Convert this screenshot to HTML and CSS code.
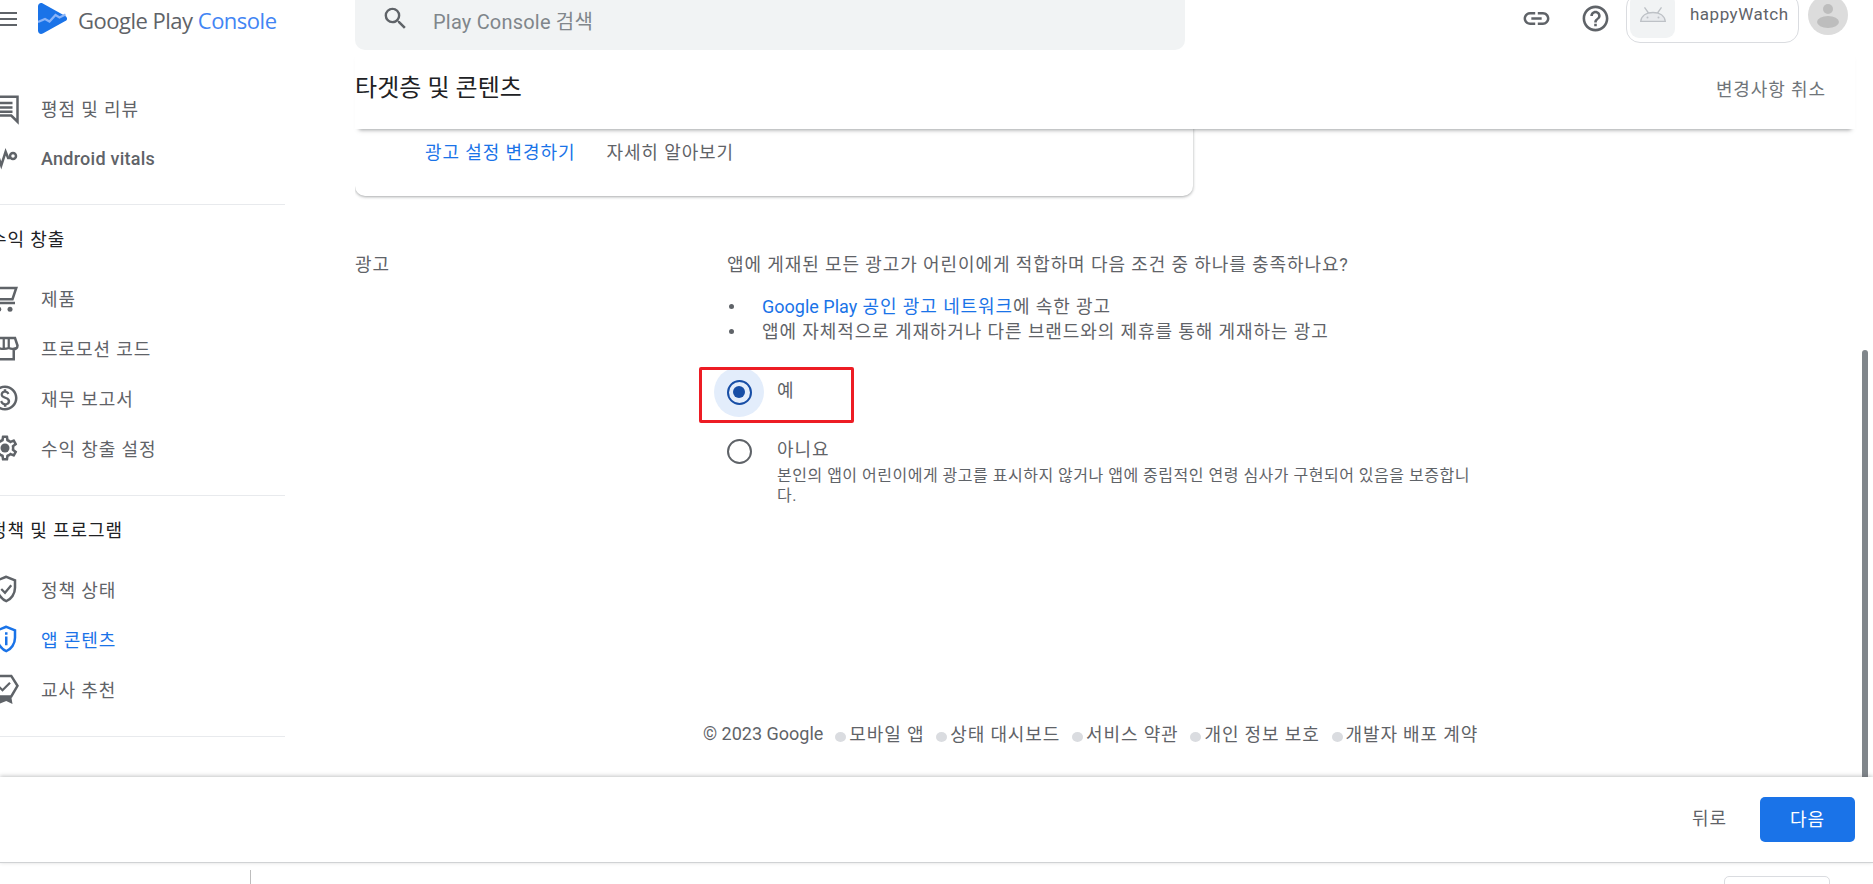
FILE: index.html
```html
<!DOCTYPE html>
<html lang="ko">
<head>
<meta charset="utf-8">
<title>Google Play Console</title>
<link rel="stylesheet" href="styles.css">
</head>
<body>
<div class="app">
  <header class="topbar">
    <div class="brand">
      <svg class="menu-icon" viewBox="0 0 18 18"><path d="M0 2h17v2H0zM0 8h17v2H0zM0 14h17v2H0z"/></svg>
      <svg class="logo" viewBox="0 0 29 31"><path d="M0 3.500C0 .8 2.600-.8 4.800.6l22.500 12.300c2.300 1.300 2.300 4 0 5.200L4.800 30.400C2.600 31.700 0 30.200 0 27.500z" fill="#1a73e8"/><path d="M0 19l7-3 4.500 2.500 6-6.500 4 2.500 6-3" fill="none" stroke="#8ab4f8" stroke-width="2.200"/></svg>
      <span class="brand-text">Google Play <span class="brand-accent">Console</span></span>
    </div>
    <div class="search">
      <svg class="search-icon" viewBox="0 0 24 24"><path d="M15.500 14h-.79l-.28-.27A6.471 6.471 0 0 0 16 9.500 6.500 6.500 0 1 0 9.500 16c1.610 0 3.090-.59 4.230-1.570l.27.28v.79l5 4.990L20.490 19l-4.990-5zm-6 0C7.010 14 5 11.990 5 9.500S7.010 5 9.500 5 14 7.010 14 9.500 11.990 14 9.500 14z"/></svg>
      <span class="search-text">Play Console 검색</span>
    </div>
    <div class="top-actions">
      <svg class="link-icon" viewBox="0 0 24 24"><path d="M3.900 12c0-1.710 1.390-3.100 3.100-3.100h4V7H7c-2.760 0-5 2.240-5 5s2.240 5 5 5h4v-1.900H7c-1.710 0-3.100-1.390-3.100-3.100zM8 13h8v-2H8v2zm9-6h-4v1.900h4c1.710 0 3.100 1.390 3.100 3.100s-1.390 3.100-3.100 3.100h-4V17h4c2.760 0 5-2.240 5-5s-2.240-5-5-5z"/></svg>
      <svg class="help-icon" viewBox="0 0 24 24"><path d="M11 18h2v-2h-2v2zm1-16C6.480 2 2 6.480 2 12s4.480 10 10 10 10-4.480 10-10S17.520 2 12 2zm0 18c-4.410 0-8-3.590-8-8s3.590-8 8-8 8 3.590 8 8-3.590 8-8 8zm0-14c-2.210 0-4 1.790-4 4h2c0-1.100.9-2 2-2s2 .9 2 2c0 2-3 1.750-3 5h2c0-2.250 3-2.500 3-5 0-2.210-1.790-4-4-4z"/></svg>
      <div class="app-chip">
        <div class="app-thumb">
          <svg class="android-icon" viewBox="0 0 26 15"><path d="M.7 14.300C1.400 8.800 6.300 5.500 13 5.500s11.600 3.300 12.300 8.800z" fill="#e8eaed" stroke="#bdc1c6" stroke-width="1.300"/><path d="M4.500.4l4 5.600M21.500.4l-4 5.600" stroke="#bdc1c6" stroke-width="1.300"/><circle cx="7.500" cy="10.500" r="1" fill="#bdc1c6"/><circle cx="18.500" cy="10.500" r="1" fill="#bdc1c6"/></svg>
        </div>
        <span class="app-name">happyWatch</span>
      </div>
      <div class="avatar"><span class="avatar-head"></span><span class="avatar-body"></span></div>
    </div>
  </header>

  <div class="workspace">
    <nav class="sidebar">
      <div class="nav-group nav-group-first">
        <a class="nav-item">
          <svg class="nav-icon" viewBox="0 0 24 24"><path d="M3 3h19v20l-5-5H3z" fill="none" stroke="#5f6368" stroke-width="2"/><path d="M3 7h15v2H3zM3 10.500h15v2H3zM3 14h15v2H3z" fill="#5f6368"/></svg>
          <span>평점 및 리뷰</span>
        </a>
        <a class="nav-item nav-item-latin">
          <svg class="nav-icon" viewBox="0 0 24 24"><path d="M2 12h5l2 6 3.500-11 2 5h1.500" fill="none" stroke="#5f6368" stroke-width="2"/><circle cx="18.400" cy="10.400" r="2.400" fill="none" stroke="#5f6368" stroke-width="2"/></svg>
          <span>Android vitals</span>
        </a>
      </div>
      <div class="nav-group">
        <h3 class="nav-title">수익 창출</h3>
        <a class="nav-item">
          <svg class="nav-icon" viewBox="0 0 24 24"><path d="M0 4h21l-3 9H5l-2 3h17" fill="none" stroke="#5f6368" stroke-width="2"/><circle cx="7" cy="21" r="2" fill="#5f6368"/><circle cx="16" cy="21" r="2" fill="#5f6368"/></svg>
          <span>제품</span>
        </a>
        <a class="nav-item">
          <svg class="nav-icon" viewBox="0 0 24 24"><path d="M2 4h18l2 6c0 2-1.500 3-3 3v8H3v-8" fill="none" stroke="#5f6368" stroke-width="2"/><path d="M7 4v8M11 4v8M15 4v8M2 4l-1 7c1 2 4 2 6 1 2 1 6 1 8 0 2 1 4 1 6 0" fill="none" stroke="#5f6368" stroke-width="1.800"/></svg>
          <span>프로모션 코드</span>
        </a>
        <a class="nav-item">
          <svg class="nav-icon" viewBox="0 0 24 24"><path fill="#5f6368" d="M12 2C6.480 2 2 6.480 2 12s4.480 10 10 10 10-4.480 10-10S17.520 2 12 2zm0 18c-4.410 0-8-3.590-8-8s3.590-8 8-8 8 3.590 8 8-3.590 8-8 8z"/><path fill="#5f6368" d="M12.890 11.100c-1.780-.59-2.640-.96-2.640-1.900 0-1.020 1.110-1.390 1.810-1.390 1.310 0 1.790.99 1.900 1.340l1.580-.67c-.15-.45-.82-1.920-2.540-2.240V5h-2v1.260c-2.480.56-2.490 2.860-2.490 2.960 0 2.270 2.250 2.910 3.350 3.310 1.580.56 2.280 1.070 2.280 2.030 0 1.130-1.050 1.610-1.980 1.610-1.820 0-2.340-1.870-2.400-2.090l-1.660.67c.63 2.190 2.280 2.780 3.020 2.960V19h2v-1.240c.52-.09 3.020-.59 3.020-3.220.01-1.390-.6-2.610-3.250-3.440z"/></svg>
          <span>재무 보고서</span>
        </a>
        <a class="nav-item">
          <svg class="nav-icon" viewBox="0 0 24 24"><path fill="#5f6368" d="M19.430 12.980c.04-.32.07-.64.07-.98 0-.34-.03-.66-.07-.98l2.110-1.650c.19-.15.24-.42.12-.64l-2-3.460c-.09-.16-.26-.25-.44-.25-.06 0-.12.01-.17.03l-2.490 1c-.52-.4-1.080-.73-1.690-.98l-.38-2.650C14.460 2.180 14.250 2 14 2h-4c-.25 0-.46.18-.49.42l-.38 2.650c-.61.25-1.170.59-1.690.98l-2.490-1c-.06-.02-.12-.03-.18-.03-.17 0-.34.09-.43.25l-2 3.460c-.13.22-.07.49.12.64l2.110 1.650c-.04.32-.07.65-.07.98 0 .33.03.66.07.98l-2.110 1.650c-.19.15-.24.42-.12.64l2 3.460c.09.16.26.25.44.25.06 0 .12-.01.17-.03l2.490-1c.52.4 1.080.73 1.690.98l.38 2.650c.03.24.24.42.49.42h4c.25 0 .46-.18.49-.42l.38-2.650c.61-.25 1.170-.59 1.690-.98l2.490 1c.06.02.12.03.18.03.17 0 .34-.09.43-.25l2-3.460c.12-.22.07-.49-.12-.64l-2.110-1.650zm-1.980-1.710c.04.31.05.52.05.73 0 .21-.02.43-.05.73l-.14 1.130.89.7 1.080.84-.7 1.210-1.270-.51-1.040-.42-.9.68c-.43.32-.84.56-1.250.73l-1.060.43-.16 1.130-.2 1.350h-1.400l-.19-1.350-.16-1.130-1.060-.43c-.43-.18-.83-.41-1.230-.71l-.91-.7-1.060.43-1.270.51-.7-1.210 1.080-.84.89-.7-.14-1.130c-.03-.31-.05-.54-.05-.74s.02-.43.05-.73l.14-1.130-.89-.7-1.080-.84.7-1.210 1.270.51 1.040.42.9-.68c.43-.32.84-.56 1.250-.73l1.060-.43.16-1.130.2-1.350h1.390l.19 1.350.16 1.130 1.060.43c.43.18.83.41 1.230.71l.91.7 1.060-.43 1.270-.51.7 1.210-1.070.85-.89.7.14 1.130z"/><circle cx="12" cy="12" r="3.600" fill="#5f6368"/></svg>
          <span>수익 창출 설정</span>
        </a>
      </div>
      <div class="nav-group">
        <h3 class="nav-title">정책 및 프로그램</h3>
        <a class="nav-item">
          <svg class="nav-icon" viewBox="0 0 24 24"><path d="M13 2.200L6 5v6c0 4.800 3 9.200 7 10.700 4-1.500 7-5.900 7-10.700V5z" fill="none" stroke="#5f6368" stroke-width="2"/><path d="M9 12l3 3 5-6" fill="none" stroke="#5f6368" stroke-width="1.800"/></svg>
          <span>정책 상태</span>
        </a>
        <a class="nav-item nav-item-active">
          <svg class="nav-icon" viewBox="0 0 24 24"><path d="M13 2.200L6 5v6c0 4.800 3 9.200 7 10.700 4-1.500 7-5.900 7-10.700V5z" fill="none" stroke="#1a73e8" stroke-width="2"/><path d="M12 10h2v7h-2zM12 6.500h2v2h-2z" fill="#1a73e8"/></svg>
          <span>앱 콘텐츠</span>
        </a>
        <a class="nav-item">
          <svg class="nav-icon" viewBox="0 0 24 24"><path d="M5 1.500h12l5 8-5 8.500H5z" fill="none" stroke="#5f6368" stroke-width="2"/><path d="M7 10l3 3 6-6" fill="none" stroke="#5f6368" stroke-width="1.800"/><path d="M5 18h12l1 6-5-2.500L7 24H5z" fill="#5f6368"/></svg>
          <span>교사 추천</span>
        </a>
      </div>
    </nav>

    <main class="content">
      <div class="title-bar">
        <h1 class="page-title">타겟층 및 콘텐츠</h1>
        <span class="discard">변경사항 취소</span>
      </div>
      <div class="scroll-area">
        <section class="card">
          <a class="link">광고 설정 변경하기</a>
          <span class="learn-more">자세히 알아보기</span>
        </section>
        <section class="form-row">
          <div class="form-label">광고</div>
          <div class="form-body">
            <p class="question">앱에 게재된 모든 광고가 어린이에게 적합하며 다음 조건 중 하나를 충족하나요?</p>
            <ul class="bullets">
              <li><span><a class="link"><span class="latin">Google Play</span> 공인 광고 네트워크</a>에 속한 광고</span></li>
              <li><span>앱에 자체적으로 게재하거나 다른 브랜드와의 제휴를 통해 게재하는 광고</span></li>
            </ul>
            <div class="option option-yes">
              <span class="radio-wrap radio-wrap-on"><span class="radio radio-on"></span></span>
              <span class="option-label">예</span>
              <span class="highlight"></span>
            </div>
            <div class="option option-no">
              <span class="radio-wrap"><span class="radio"></span></span>
              <div class="option-text">
                <span class="option-label">아니요</span>
                <p class="option-desc">본인의 앱이 어린이에게 광고를 표시하지 않거나 앱에 중립적인 연령 심사가 구현되어 있음을 보증합니다.</p>
              </div>
            </div>
          </div>
        </section>
        <footer class="page-footer">
          <span class="latin">© 2023 Google</span>
          <span class="dot"></span><span>모바일 앱</span>
          <span class="dot"></span><span>상태 대시보드</span>
          <span class="dot"></span><span>서비스 약관</span>
          <span class="dot"></span><span>개인 정보 보호</span>
          <span class="dot"></span><span>개발자 배포 계약</span>
        </footer>
        <div class="scrollbar"></div>
      </div>
    </main>
  </div>

  <div class="action-bar">
    <span class="back">뒤로</span>
    <button class="next" type="button">다음</button>
  </div>
  <div class="lower-strip">
    <span class="strip-rule"></span>
    <span class="strip-button"></span>
  </div>
</div>
</body>
</html>
```

FILE: styles.css
```css
* { box-sizing: border-box; }
html, body { margin: 0; height: 884px; overflow: hidden; background: #fff; }
body { font-family: Roboto, "Noto Sans CJK KR", sans-serif; color: #5f6368; font-size: 18px; letter-spacing: 0.9px; }
h1, h3, p, ul { margin: 0; padding: 0; font-weight: 400; }
ul { list-style: none; }
.latin { letter-spacing: 0; }

.app { display: flex; flex-direction: column; width: 1873px; height: 884px; overflow: hidden; }

/* top bar */
.topbar { display: flex; height: 50px; flex: none; overflow: hidden; }
.brand { display: flex; width: 355px; flex: none; align-items: flex-start; }
.menu-icon { width: 18px; height: 18px; margin-top: 10px; fill: #5f6368; flex: none; }
.logo { width: 29px; height: 31px; margin: 3px 0 0 20px; flex: none; }
.brand-text { margin: 5px 0 0 11px; font-family: "Open Sans", sans-serif; font-size: 22px; line-height: 30px; letter-spacing: -0.5px; color: #5f6368; white-space: nowrap; }
.brand-accent { color: #4285f4; }

.search { display: flex; align-items: flex-start; width: 830px; height: 50px; background: #f1f3f4; border-radius: 0 0 10px 10px; padding-left: 26px; flex: none; }
.search-icon { width: 29px; height: 29px; margin-top: 4px; fill: #5f6368; flex: none; }
.search-text { margin: 8px 0 0 23px; font-size: 20px; line-height: 28px; color: #80868b; letter-spacing: 0.2px; }

.top-actions { display: flex; align-items: flex-start; margin-left: auto; padding-right: 25px; }
.link-icon, .help-icon { width: 31px; height: 31px; fill: #5f6368; margin-top: 3px; flex: none; }
.help-icon { margin-left: 28px; }
.app-chip { display: flex; align-items: flex-start; width: 173px; height: 50px; margin: -7px 0 0 15px; padding: 0 0 0 3px; border: 1px solid #dadce0; border-radius: 14px; }
.app-thumb { display: flex; justify-content: center; width: 45px; height: 44px; background: #f1f3f4; border-radius: 9px; padding-top: 13px; }
.android-icon { width: 26px; height: 15px; }
.app-name { margin: 8px 0 0 15px; font-size: 17px; line-height: 24px; color: #5f6368; letter-spacing: 0.5px; }
.avatar { position: relative; width: 40px; height: 40px; margin: -5px 0 0 9px; border-radius: 50%; background: #dcdcdc; overflow: hidden; }
.avatar-head { position: absolute; left: 15px; top: 9px; width: 10px; height: 10px; border-radius: 50%; background: #bdbdbd; }
.avatar-body { position: absolute; left: 9px; top: 21px; width: 22px; height: 12px; border-radius: 50%; background: #bdbdbd; }

/* workspace */
.workspace { display: flex; height: 727px; flex: none; }
.sidebar { width: 285px; flex: none; overflow: hidden; }
.nav-group { padding: 22px 0; border-bottom: 1px solid #e8eaed; }
.nav-group-first { padding: 33px 0 21px; }
.nav-title { height: 24px; margin: 0 0 22px -10px; font-size: 18px; line-height: 26px; color: #202124; white-space: nowrap; }
.nav-item { display: flex; align-items: center; height: 50px; gap: 21px; color: #5f6368; white-space: nowrap; }
.nav-icon { width: 30px; height: 30px; margin-left: -10px; flex: none; overflow: visible; }
.nav-item-latin { font-weight: 500; letter-spacing: 0.25px; }
.nav-item-active { color: #1a73e8; }

/* content */
.content { display: flex; flex-direction: column; flex: 1; min-width: 0; margin-left: 70px; }
.title-bar { position: relative; z-index: 2; display: flex; align-items: center; justify-content: space-between; height: 79px; flex: none; margin-right: 18px; padding: 0 29px 3px 0; background: #fff; box-shadow: 0 5px 4px -4px rgba(60, 64, 67, .5); }
.page-title { font-size: 24px; line-height: 28px; color: #202124; letter-spacing: 0.05px; }
.discard { color: #70757a; }

.scroll-area { position: relative; flex: 1; overflow: hidden; }
.card { display: flex; gap: 31px; width: 838px; height: 86px; margin-top: -19px; padding: 31px 0 0 70px; line-height: 24px; background: #fff; border-radius: 0 0 10px 10px; box-shadow: 0 1px 3px rgba(60, 64, 67, .45); }
.link { color: #1a73e8; }
.form-row { display: flex; margin-top: 57px; }
.form-label { width: 372px; flex: none; line-height: 24px; }
.form-body { width: 780px; }
.question { line-height: 24px; }
.bullets { margin-top: 17px; line-height: 25px; }
.bullets li { display: flex; align-items: center; }
.bullets li::before { content: ""; width: 5px; height: 5px; margin: 0 28px 0 2px; border-radius: 50%; background: #5f6368; flex: none; }

.option { position: relative; display: flex; align-items: flex-start; margin-left: -13px; }
.option-yes { height: 50px; margin-top: 23px; }
.option-no { margin-top: 9px; }
.radio-wrap { display: flex; align-items: center; justify-content: center; width: 50px; height: 50px; margin-right: 13px; border-radius: 50%; flex: none; }
.radio-wrap-on { background: #e3edfb; }
.radio { position: relative; width: 25px; height: 25px; border: 2px solid #5f6368; border-radius: 50%; }
.radio-on { border-color: #174ea6; }
.radio-on::after { content: ""; position: absolute; left: 4.500px; top: 4.500px; width: 12px; height: 12px; border-radius: 50%; background: #174ea6; }
.option-label { display: block; line-height: 24px; }
.option-yes .option-label { margin-top: 12px; }
.option-text { padding-top: 12px; width: 700px; }
.option-desc { margin-top: 4px; width: 700px; font-size: 16px; line-height: 20px; letter-spacing: 0.5px; }
.highlight { position: absolute; left: -15px; top: 0; width: 155px; height: 56px; border: 3px solid #ed1c24; border-radius: 2px; }

.page-footer { display: flex; align-items: center; height: 24px; margin: 215px 0 0 348px; white-space: nowrap; letter-spacing: 0.85px; }
.dot { width: 11px; height: 10px; margin: 8px 3px 0 12px; border-radius: 50%; background: #dadce0; flex: none; }
.scrollbar { position: absolute; right: 5px; top: 221px; bottom: 0; width: 6px; border-radius: 3px 3px 0 0; background: #80868b; }

/* action bar */
.action-bar { position: relative; z-index: 3; display: flex; align-items: center; justify-content: flex-end; height: 86px; flex: none; padding-right: 18px; background: #fff; border-bottom: 1px solid #d0d2d4; box-shadow: 0 -1px 4px rgba(60, 64, 67, .3); }
.back { margin-right: 33px; color: #5f6368; padding-bottom: 6px; }
.next { width: 95px; height: 45px; padding: 0 0 3px; border: 0; border-radius: 5px; background: #1a73e8; color: #fff; font: inherit; letter-spacing: inherit; }

.lower-strip { display: flex; flex: 1; align-items: flex-start; overflow: hidden; }
.strip-rule { width: 1px; height: 20px; margin: 7px 0 0 250px; background: #bdbdbd; }
.strip-button { width: 106px; height: 30px; margin: 13px 43px 0 auto; border: 1px solid #dadce0; border-radius: 5px; }
```
